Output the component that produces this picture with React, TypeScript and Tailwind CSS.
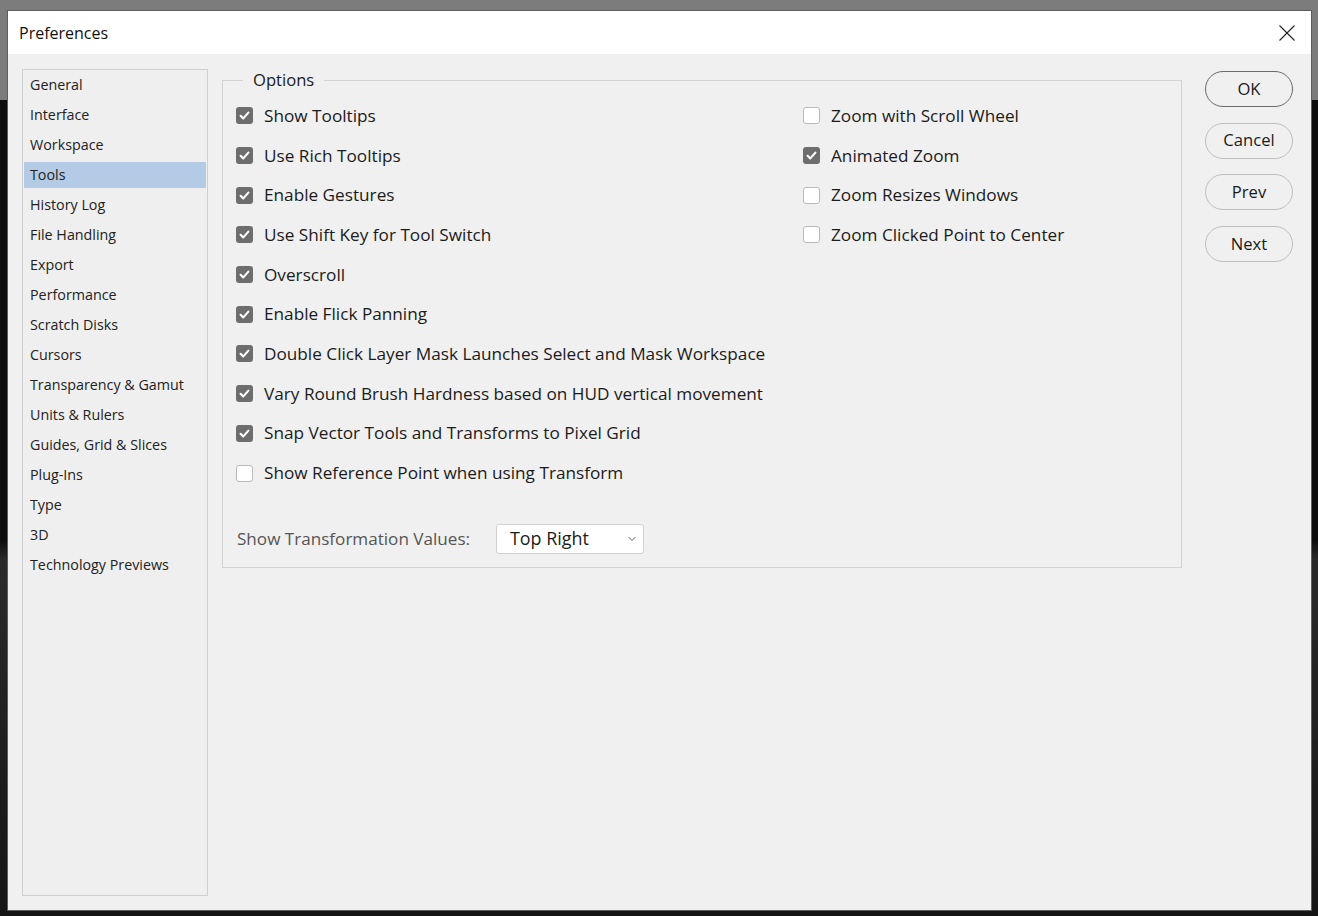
import React from "react";

const navItems = [
  "General",
  "Interface",
  "Workspace",
  "Tools",
  "History Log",
  "File Handling",
  "Export",
  "Performance",
  "Scratch Disks",
  "Cursors",
  "Transparency & Gamut",
  "Units & Rulers",
  "Guides, Grid & Slices",
  "Plug-Ins",
  "Type",
  "3D",
  "Technology Previews",
];

const leftOpts: [string, boolean][] = [
  ["Show Tooltips", true],
  ["Use Rich Tooltips", true],
  ["Enable Gestures", true],
  ["Use Shift Key for Tool Switch", true],
  ["Overscroll", true],
  ["Enable Flick Panning", true],
  ["Double Click Layer Mask Launches Select and Mask Workspace", true],
  ["Vary Round Brush Hardness based on HUD vertical movement", true],
  ["Snap Vector Tools and Transforms to Pixel Grid", true],
  ["Show Reference Point when using Transform", false],
];

const rightOpts: [string, boolean][] = [
  ["Zoom with Scroll Wheel", false],
  ["Animated Zoom", true],
  ["Zoom Resizes Windows", false],
  ["Zoom Clicked Point to Center", false],
];

function Check({ checked }: { checked: boolean }) {
  if (checked) {
    return (
      <span className="flex h-[17px] w-[17px] shrink-0 items-center justify-center rounded-[3px] bg-[#6d6d6d]">
        <svg width="13" height="13" viewBox="0 0 13 13">
          <path d="M2.6 6.8 L5.3 9.4 L10.4 3.6" fill="none" stroke="#fff" strokeWidth="2.1" strokeLinecap="round" strokeLinejoin="round" />
        </svg>
      </span>
    );
  }
  return <span className="h-[17px] w-[17px] shrink-0 rounded-[3px] border border-[#b9b9b9] bg-white" />;
}

function Row({ label, checked }: { label: string; checked: boolean }) {
  return (
    <div className="flex h-[39.7px] items-center gap-[11px]">
      <Check checked={checked} />
      <span className="whitespace-nowrap text-[17.2px] text-[#1b1b1b]">{label}</span>
    </div>
  );
}

function Btn({ label, primary }: { label: string; primary?: boolean }) {
  return (
    <div
      className={
        "flex h-[36px] w-[88px] items-center justify-center rounded-full bg-[#f0f0f0] text-[16.6px] text-[#1b1b1b] " +
        (primary ? "border border-[#6a6a6a]" : "border border-[#bdbdbd]")
      }
    >
      {label}
    </div>
  );
}

export default function App() {
  return (
    <div
      className="h-[916px] w-[1318px] overflow-hidden bg-[linear-gradient(to_bottom,#7c7c7c_0px,#7c7c7c_100px,#0c0c0c_100px,#0c0c0c_540px,#2a2a2a_560px,#151515_916px)] pl-[7px] pt-[10px]"
      style={{ fontFamily: '"Open Sans", "Noto Sans", sans-serif' }}
    >
      <div className="flex h-[901px] w-[1305px] flex-col border border-[#5c5c5c] bg-[#f0f0f0]">
        {/* title bar */}
        <div className="flex h-[43px] shrink-0 items-center justify-between bg-white pl-[11px] pr-[16px]">
          <span className="text-[16px] text-[#111]">Preferences</span>
          <svg width="16" height="16" viewBox="0 0 16 16">
            <path d="M0.5 0.5 L15.5 15.5 M15.5 0.5 L0.5 15.5" stroke="#222" strokeWidth="1.1" />
          </svg>
        </div>
        {/* body */}
        <div className="flex flex-1 pl-[14px] pt-[15px]">
          {/* nav */}
          <div className="h-[827px] w-[186px] shrink-0 border border-[#d0d0d0] bg-[#efefef] px-[1px] pt-[2px]">
            <div className="flex flex-col gap-[4px]">
              {navItems.map((n) => (
                <div
                  key={n}
                  className={
                    "flex h-[26px] items-center pl-[6px] text-[14.3px] text-[#222] " +
                    (n === "Tools" ? "bg-[#b3cbe4]" : "")
                  }
                >
                  {n}
                </div>
              ))}
            </div>
          </div>
          {/* options group */}
          <div className="ml-[14px] mt-[11px] h-[488px] w-[960px] shrink-0">
            <div className="relative h-full border border-[#d3d3d3] pl-[13px] pt-[15px]">
              <span className="absolute left-[20px] top-[-13px] bg-[#f0f0f0] px-[10px] text-[16.6px] leading-[24px] text-[#1b1b1b]">
                Options
              </span>
              <div className="flex">
                <div className="flex w-[567px] flex-col">
                  {leftOpts.map(([l, c]) => (
                    <Row key={l} label={l} checked={c} />
                  ))}
                </div>
                <div className="flex flex-col">
                  {rightOpts.map(([l, c]) => (
                    <Row key={l} label={l} checked={c} />
                  ))}
                </div>
              </div>
              <div className="mt-[31px] flex items-center">
                <span className="w-[260px] pl-[1px] text-[17.1px] text-[#555]">Show Transformation Values:</span>
                <div className="flex h-[30px] w-[148px] items-center justify-between rounded-[3px] border border-[#d0d0d0] bg-white pl-[13px] pr-[6px]">
                  <span className="text-[17.9px] text-[#1b1b1b]">Top Right</span>
                  <svg width="10" height="6" viewBox="0 0 10 6">
                    <path d="M1.5 1 L5 4.5 L8.5 1" fill="none" stroke="#666" strokeWidth="1" />
                  </svg>
                </div>
              </div>
            </div>
          </div>
          {/* buttons */}
          <div className="ml-[23px] flex flex-col gap-[15.7px] pt-[2px]">
            <Btn label="OK" primary />
            <Btn label="Cancel" />
            <Btn label="Prev" />
            <Btn label="Next" />
          </div>
        </div>
      </div>
    </div>
  );
}
